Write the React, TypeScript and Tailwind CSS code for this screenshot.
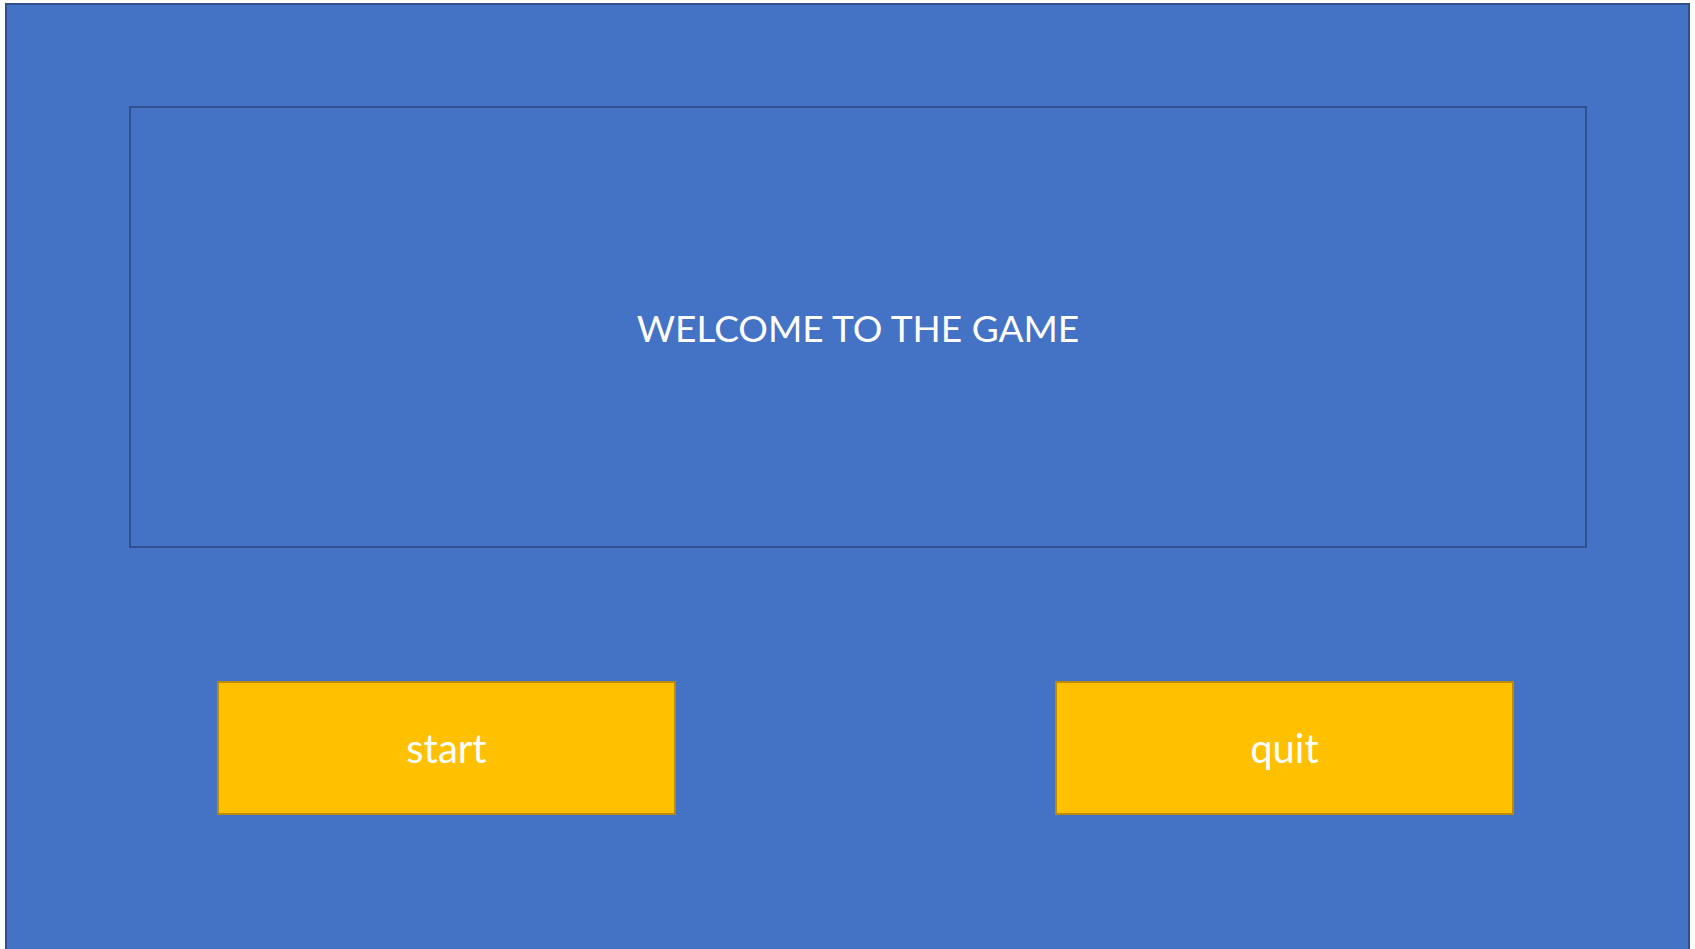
export default function App() {
  return (
    <div className="w-full h-[949px] bg-white pt-[3px] px-[5px] overflow-hidden font-['Lato','Open_Sans',sans-serif]">
      <div className="h-[946px] bg-[#4472c4] border-l-2 border-t-2 border-r-2 border-[#2f528f]">
        {/* title panel */}
        <div className="ml-[122px] mt-[101px] w-[1458px] h-[442px] border-2 border-[#2f528f] flex items-center justify-center">
          <span className="text-white text-[37px] leading-none">WELCOME TO THE GAME</span>
        </div>

        {/* buttons */}
        <div className="mt-[133px] ml-[210px] flex gap-[379px]">
          <button className="w-[459px] h-[134px] bg-[#ffc000] border-2 border-[#bc8c00] text-white text-[40px] leading-none">
            start
          </button>
          <button className="w-[459px] h-[134px] bg-[#ffc000] border-2 border-[#bc8c00] text-white text-[40px] leading-none">
            quit
          </button>
        </div>
      </div>
    </div>
  );
}
